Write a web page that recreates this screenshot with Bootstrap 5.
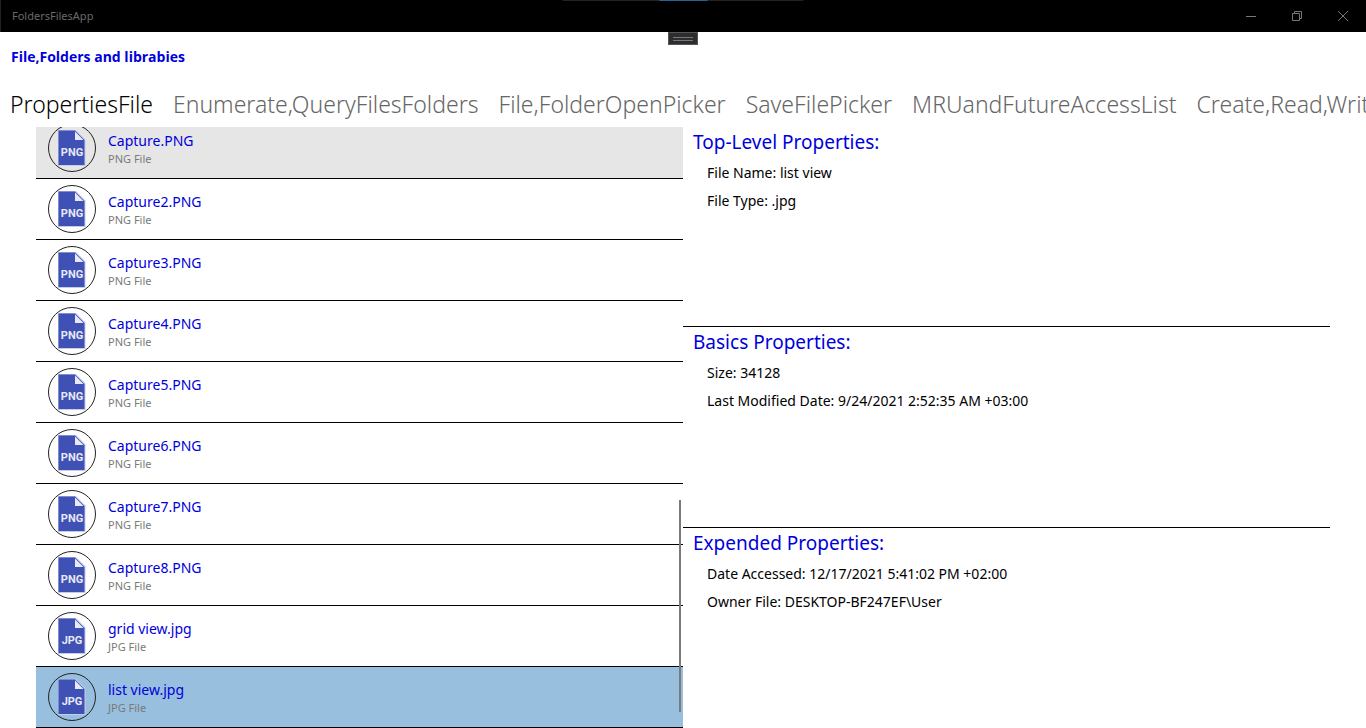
<!DOCTYPE html>
<html lang="en">
<head>
<meta charset="utf-8">
<meta name="viewport" content="width=device-width, initial-scale=1">
<title>FoldersFilesApp</title>
<link href="https://cdn.jsdelivr.net/npm/bootstrap@5.3.0/dist/css/bootstrap.min.css" rel="stylesheet">
<style>
  body { font-family: "Noto Sans", "Open Sans", sans-serif; font-size: 14px; line-height: 20px; color: #000; background: #fff; }
  .title-bar { height: 32px; background: #000; color: #6a6a6a; font-size: 11px; border-left: 1px solid #222; }
  .title-text { padding-left: 11px; }
  .win-btn { width: 46px; height: 32px; color: #777; background: none; border: 0; padding: 0; display: grid; place-items: center; }
  .top-strip { top: 0; left: 50%; width: 241px; height: 1px; background: #222; transform: translateX(-50%); }
  .top-strip span { width: 48px; height: 1px; background: #2a6496; }
  .grip { top: 32px; left: 50%; width: 30px; height: 13px; padding: 0; background: #2d2d30; border: 1px solid #555; transform: translateX(-50%); }
  .grip span { width: 20px; height: 4px; border: solid #77777b; border-width: 1px 0; }
  .app-title { font-family: "Open Sans", sans-serif; font-size: 14px; line-height: 20px; font-weight: 700; color: #0000dc; padding: 15px 11px 0; margin: 0; }
  .pivot { height: 60px; gap: 20px; padding: 0 10px; }
  .pivot .nav-link { padding: 21px 0 0; font-size: 23px; line-height: 32px; font-weight: 300; color: #666; white-space: nowrap; }
  .pivot .nav-link.active { color: #000; }
  .panes { padding: 0 36px; }
  .file-row { height: 61px; flex: none; border: 0; border-bottom: 1px solid #000; border-radius: 0; padding: 2px 12px 0; background: #fff; }
  .file-row svg { margin-top: -2px; }
  .file-row.hovered { background: #e6e6e6; }
  .file-row.selected { background: #99bfdf; }
  .file-name { line-height: 20px; color: #0000dc; }
  .file-kind { font-size: 11px; line-height: 16px; color: #7a7a7a; }
  .thumb { width: 2px; right: 2px; top: 62%; bottom: 16px; background: #7a7a7a; }
  .props { display: grid; grid-template-rows: repeat(3, minmax(0, 1fr)); }
  .prop { padding: 1px 10px 0; }
  .prop:not(:last-child) { border-bottom: 1px solid #000; }
  .prop h2 { font-size: 19px; line-height: 28px; font-weight: 400; color: #0000dc; margin: 0 0 7px; }
  .prop p { margin: 0 0 8px 14px; }
</style>
</head>
<body>
<svg class="d-none" aria-hidden="true">
  <symbol id="doc" viewBox="0 0 48 48">
    <circle cx="24" cy="24" r="23.5" fill="#fff" fill-opacity="var(--disc)" stroke="#222"/>
    <path d="M10 6h18l9.500 9.500v26.500h-27.500z" fill="#c5cbea"/>
    <path d="M10.500 6.500h16.500l9.500 9.500v25h-26z" fill="#3f51b5"/>
    <path d="M27 7.500l8.500 8.500h-8.500z" fill="#e8eaf6"/>
  </symbol>
</svg>
<div class="d-flex flex-column vh-100 overflow-hidden position-relative">
  <header class="title-bar d-flex align-items-center justify-content-between flex-shrink-0">
    <span class="title-text">FoldersFilesApp</span>
    <div class="d-flex">
      <button class="win-btn" type="button" aria-label="Minimize"><svg width="10" height="10" stroke="currentColor"><path d="M0 5.500h10"/></svg></button>
      <button class="win-btn" type="button" aria-label="Restore"><svg width="10" height="10" fill="none" stroke="currentColor"><path d="M.5 2.500h7v7h-7zM2.500 2.500v-2h7v7h-2"/></svg></button>
      <button class="win-btn" type="button" aria-label="Close"><svg width="10" height="10" stroke="currentColor"><path d="M0 0l10 10M10 0L0 10"/></svg></button>
    </div>
  </header>
  <div class="top-strip position-absolute d-flex justify-content-center"><span></span></div>
  <button class="grip position-absolute d-flex align-items-center justify-content-center" type="button" aria-label="Toolbar"><span></span></button>

  <h1 class="app-title">File,Folders and librabies</h1>
  <nav class="pivot nav flex-nowrap overflow-hidden flex-shrink-0" aria-label="Sections">
    <a class="nav-link active" href="#" aria-current="page">PropertiesFile</a>
    <a class="nav-link" href="#">Enumerate,QueryFilesFolders</a>
    <a class="nav-link" href="#">File,FolderOpenPicker</a>
    <a class="nav-link" href="#">SaveFilePicker</a>
    <a class="nav-link" href="#">MRUandFutureAccessList</a>
    <a class="nav-link" href="#">Create,Read,Write</a>
  </nav>

  <main class="panes flex-grow-1 overflow-hidden">
    <div class="row g-0 h-100">
      <div class="col-6 h-100 position-relative">
        <div class="list-group rounded-0 h-100 overflow-hidden justify-content-end" id="files"></div>
        <div class="thumb position-absolute"></div>
      </div>
      <div class="props col-6 h-100">
        <section class="prop"><h2>Top-Level Properties:</h2><p>File Name: list view</p><p>File Type: .jpg</p></section>
        <section class="prop"><h2>Basics Properties:</h2><p>Size: 34128</p><p>Last Modified Date: 9/24/2021 2:52:35 AM +03:00</p></section>
        <section class="prop"><h2>Expended Properties:</h2><p>Date Accessed: 12/17/2021 5:41:02 PM +02:00</p><p>Owner File: DESKTOP-BF247EF\User</p></section>
      </div>
    </div>
  </main>
</div>
<script>
  const names = ["Capture.PNG", "Capture2.PNG", "Capture3.PNG", "Capture4.PNG", "Capture5.PNG", "Capture6.PNG", "Capture7.PNG", "Capture8.PNG", "grid view.jpg", "list view.jpg"];
  document.getElementById("files").innerHTML = names.map((name, i) => {
    const kind = name.split(".").pop().toUpperCase();
    const state = i === 0 ? "hovered" : i === names.length - 1 ? "selected" : "";
    return `<a href="#" class="file-row list-group-item d-flex align-items-center gap-2 ${state}">
      <svg width="48" height="48" style="--disc:${state ? 0 : 1}" aria-hidden="true"><use href="#doc"/><text x="24" y="32" text-anchor="middle" font-family="Roboto" font-weight="700" font-size="11" fill="#e8eaf6">${kind}</text></svg>
      <span class="d-flex flex-column ms-1"><span class="file-name">${name}</span><span class="file-kind">${kind} File</span></span></a>`;
  }).join("");
</script>
<script src="https://cdn.jsdelivr.net/npm/bootstrap@5.3.0/dist/js/bootstrap.bundle.min.js"></script>
</body>
</html>
